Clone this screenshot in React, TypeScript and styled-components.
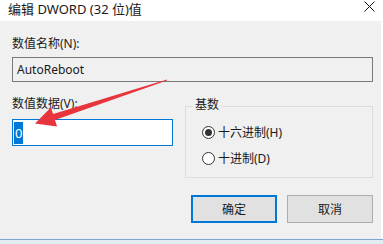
import styled, { createGlobalStyle } from 'styled-components'

const Global = createGlobalStyle`
  html, body {
    margin: 0;
    padding: 0;
    background: #fff;
  }
  body {
    font-family: "Noto Sans", "Noto Sans CJK SC", sans-serif;
    font-size: 12px;
    color: #000;
  }
`

const Window = styled.div`
  position: relative;
  width: 383px;
  height: 244px;
  display: flex;
  flex-direction: column;
  background: #fff;
  overflow: hidden;
`

const TitleBar = styled.div`
  height: 21px;
  flex: none;
  display: flex;
  align-items: center;
  justify-content: space-between;
  padding: 0 8px;
  background: #fff;
`

const Title = styled.div`
  font-size: 13px;
  line-height: 16px;
  color: #1a1a1a;
  margin-top: -4px;
`

const Close = styled.svg`
  width: 11px;
  height: 11px;
  margin-top: -8px;
`

const Body = styled.div`
  height: 218px;
  flex: none;
  margin-right: 2px;
  background: #f0f0f0;
  padding: 15px 8px 0 12px;
  box-sizing: border-box;
  display: flex;
  flex-direction: column;
`

const Label = styled.div`
  line-height: 16px;
  height: 16px;
  color: #1a1a1a;
  white-space: nowrap;
`

const TextBox = styled.div<{ $active?: boolean }>`
  box-sizing: border-box;
  height: ${p => (p.$active ? 27 : 25)}px;
  margin-top: ${p => (p.$active ? 7 : 5)}px;
  border: 1px solid ${p => (p.$active ? '#0078d7' : '#7a7a7a')};
  background: ${p => (p.$active ? '#fff' : '#f0f0f0')};
  display: flex;
  align-items: center;
  padding: 0 ${p => (p.$active ? 1 : 4)}px;
  line-height: 16px;
  color: #1a1a1a;
`

const Selected = styled.span`
  background: #0078d7;
  color: #fff;
  font-size: 13px;
  line-height: 22px;
  padding: 0 1px;
`

const Row = styled.div`
  display: flex;
  gap: 12px;
  margin-top: 14px;
`

const LeftCol = styled.div`
  width: 161px;
  display: flex;
  flex-direction: column;
`

const GroupBox = styled.div`
  flex: 1;
  margin-top: 10px;
  height: 72px;
  box-sizing: border-box;
  border: 1px solid #dcdcdc;
  display: flex;
  flex-direction: column;
  padding: 0 0 0 16px;
`

const Caption = styled.div`
  margin: -10px 0 0 -9px;
  padding: 0 2px;
  width: fit-content;
  background: #f0f0f0;
  line-height: 16px;
  color: #1a1a1a;
`

const RadioList = styled.div`
  display: flex;
  flex-direction: column;
  gap: 6px;
  margin-top: 9px;
`

const RadioRow = styled.div`
  display: flex;
  align-items: center;
  height: 20px;
  gap: 3px;
  color: #1a1a1a;
`

const RadioDot = styled.span<{ $checked?: boolean }>`
  box-sizing: border-box;
  width: 13px;
  height: 13px;
  border-radius: 50%;
  border: 1px solid #333;
  background: #fff;
  display: flex;
  align-items: center;
  justify-content: center;
  &::after {
    content: '';
    display: ${p => (p.$checked ? 'block' : 'none')};
    width: 7px;
    height: 7px;
    border-radius: 50%;
    background: #333;
  }
`

const Buttons = styled.div`
  display: flex;
  justify-content: flex-end;
  gap: 10px;
  margin-top: 17px;
`

const Button = styled.div<{ $default?: boolean }>`
  box-sizing: border-box;
  width: 86px;
  height: 28px;
  background: #e1e1e1;
  border: ${p => (p.$default ? '2px solid #0078d7' : '1px solid #adadad')};
  display: flex;
  align-items: center;
  justify-content: center;
  color: #1a1a1a;
`

const BottomEdge = styled.div`
  flex: 1;
  border-top: 1px solid #7aa6cf;
  background: #e4ecf3;
`

const Arrow = styled.svg`
  position: absolute;
  left: 0;
  top: 0;
  pointer-events: none;
`

export default () => {
  return (
    <Window>
      <Global />
      <TitleBar>
        <Title>编辑 DWORD (32 位)值</Title>
        <Close viewBox="0 0 11 11">
          <path d="M0.5 0.5 L10.5 10.5 M10.5 0.5 L0.5 10.5" stroke="#111" strokeWidth="1" fill="none" />
        </Close>
      </TitleBar>
      <Body>
        <Label>数值名称(N):</Label>
        <TextBox>AutoReboot</TextBox>
        <Row>
          <LeftCol>
            <Label>数值数据(V):</Label>
            <TextBox $active>
              <Selected>0</Selected>
            </TextBox>
          </LeftCol>
          <GroupBox>
            <Caption>基数</Caption>
            <RadioList>
              <RadioRow>
                <RadioDot $checked />
                十六进制(H)
              </RadioRow>
              <RadioRow>
                <RadioDot />
                十进制(D)
              </RadioRow>
            </RadioList>
          </GroupBox>
        </Row>
        <Buttons>
          <Button $default>确定</Button>
          <Button>取消</Button>
        </Buttons>
      </Body>
      <BottomEdge />
      <Arrow width="383" height="244" viewBox="0 0 383 244">
        <polygon
          points="167,79.6 53.1,114.1 50.9,107.5 35,123.5 57.1,126.5 54.9,119.9 167,80.6"
          fill="#e8343c"
        />
      </Arrow>
    </Window>
  )
}
